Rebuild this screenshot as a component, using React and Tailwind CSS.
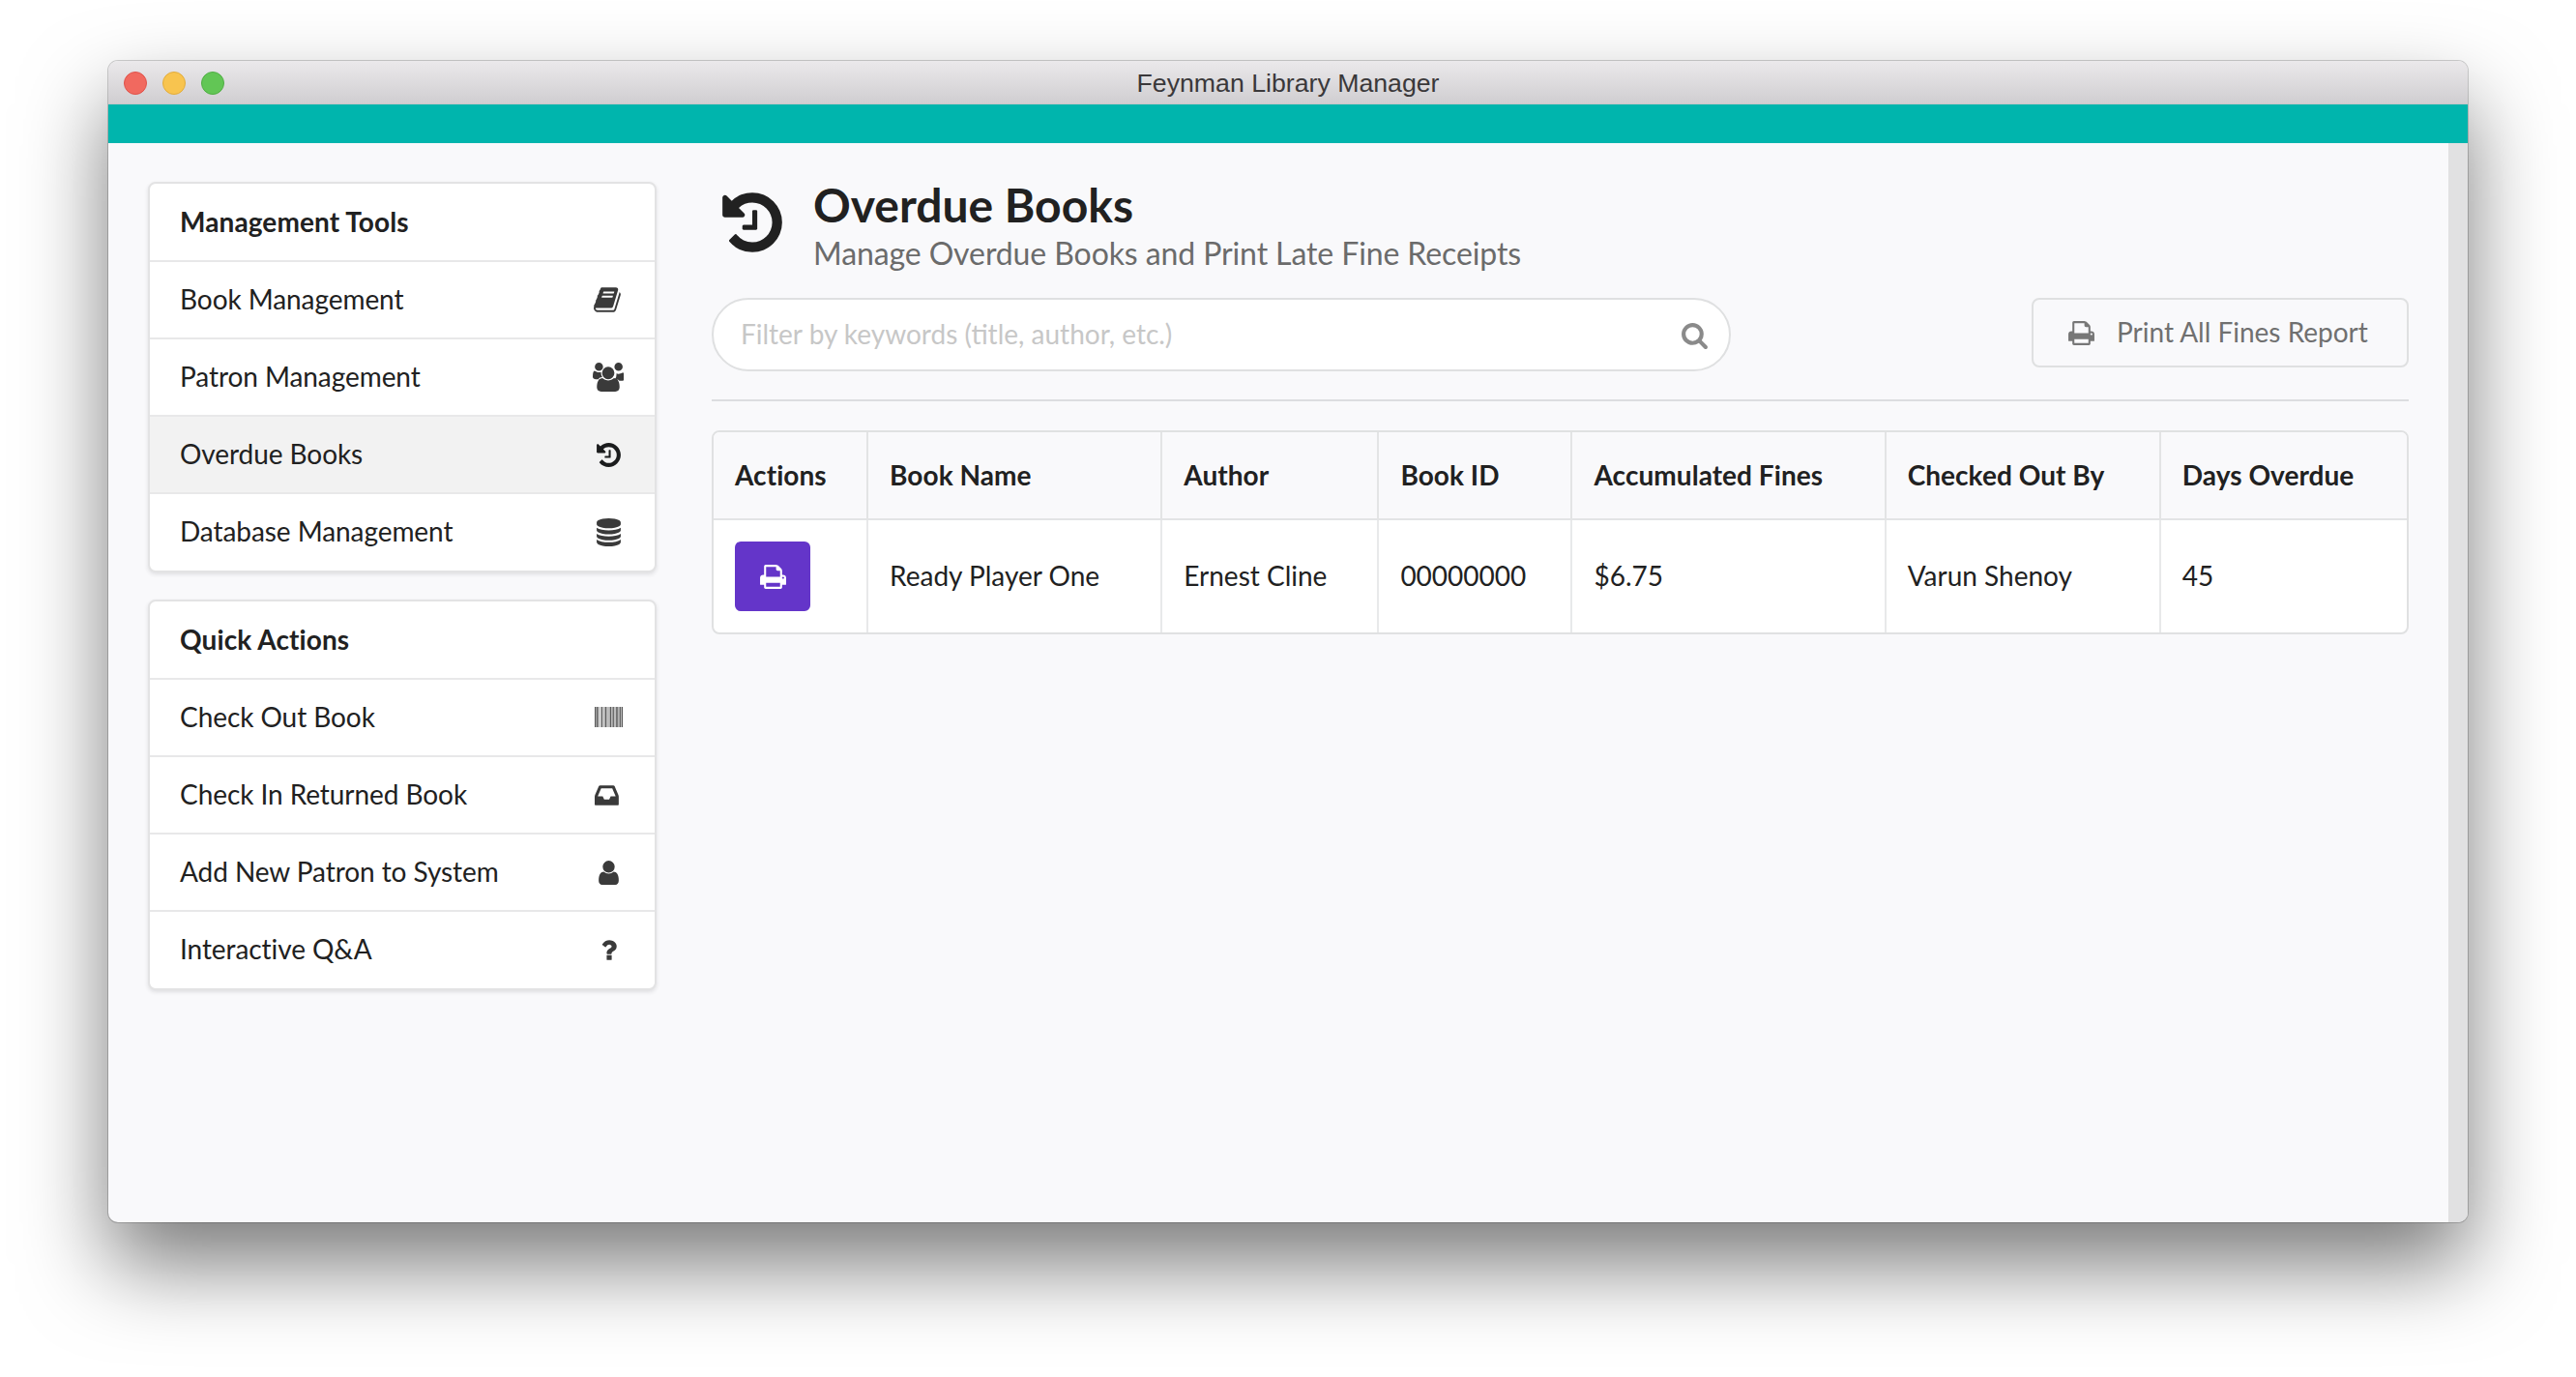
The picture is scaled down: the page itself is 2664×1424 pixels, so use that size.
import React from "react";

const P = {
  book: "M1639 478q40 57 18 129l-275 906q-19 64-76.5 107.5t-122.5 43.5h-923q-77 0-148.5-53.5t-99.5-131.5q-24-67-2-127 0-4 3-27t4-37q1-8-3-21.5t-3-19.5q2-11 8-21t16.5-23.5 16.5-23.5q23-38 45-91.5t30-91.5q3-10 .5-30t-.5-28q3-11 17-28t17-23q21-36 42-92t25-90q1-9-2.5-32t.5-28q4-13 22-30.5t22-22.5q19-26 42.5-84.5t27.5-96.5q1-8-3-25.5t-2-26.5q2-8 9-18t18-23 17-21q8-12 16.5-30.5t15-35 16-36 19.5-32 26.5-23.5 36-11.5 47.5 5.5l-1 3q38-9 51-9h761q74 0 114 56t18 130l-274 906q-36 119-71.5 153.5t-128.5 34.5h-869q-27 0-38 15-11 16-1 43 24 70 144 70h923q29 0 56-15.5t35-41.5l300-987q7-22 5-57 38 15 59 43zm-1064 2q-4 13 2 22.5t20 9.5h608q13 0 25.5-9.5t16.5-22.5l21-64q4-13-2-22.5t-20-9.5h-608q-13 0-25.5 9.5t-16.5 22.5zm-83 256q-4 13 2 22.5t20 9.5h608q13 0 25.5-9.5t16.5-22.5l21-64q4-13-2-22.5t-20-9.5h-608q-13 0-25.5 9.5t-16.5 22.5z",
  users: "M593 896q-162 5-265 128h-134q-82 0-138-40.5t-56-118.5q0-353 124-353 6 0 43.5 21t97.5 42.5 119 21.5q67 0 133-23-5 37-5 66 0 139 81 256zm1071 637q0 120-73 189.5t-194 69.5h-874q-121 0-194-69.5t-73-189.5q0-53 3.5-103.5t14-109 26.5-108.5 43-97.5 62-81 85.5-53.5 111.5-20q10 0 43 21.5t73 48 107 48 135 21.5 135-21.5 107-48 73-48 43-21.5q61 0 111.5 20t85.5 53.5 62 81 43 97.5 26.5 108.5 14 109 3.5 103.5zm-1024-1277q0 106-75 181t-181 75-181-75-75-181 75-181 181-75 181 75 75 181zm704 384q0 159-112.5 271.5t-271.5 112.5-271.5-112.5-112.5-271.5 112.5-271.5 271.5-112.5 271.5 112.5 112.5 271.5zm640 327q0 78-56 118.5t-138 40.5h-134q-103-123-265-128 81-117 81-256 0-29-5-66 66 23 133 23 59 0 119-21.5t97.5-42.5 43.5-21q124 0 124 353zm-128-711q0 106-75 181t-181 75-181-75-75-181 75-181 181-75 181 75 75 181z",
  history: "M1664 896q0 156-61 298t-164 245-245 164-298 61q-172 0-327-72.5t-264-204.5q-7-10-6.5-22.5t8.5-20.5l137-138q10-9 25-9 16 2 23 12 73 95 179 147t225 52q104 0 198.5-40.5t163.5-109.5 109.5-163.5 40.5-198.5-40.5-198.5-109.5-163.5-163.5-109.5-198.5-40.5q-98 0-188 35.5t-160 101.5l137 138q31 30 14 69-17 40-59 40h-448q-26 0-45-19t-19-45v-448q0-42 40-59 39-17 69 14l130 129q107-101 244.5-156.5t284.5-55.5q156 0 298 61t245 164 164 245 61 298zm-640-288v448q0 14-9 23t-23 9h-320q-14 0-23-9t-9-23v-64q0-14 9-23t23-9h224v-352q0-14 9-23t23-9h64q14 0 23 9t9 23z",
  database: "M896 768q237 0 443-43t325-127v170q0 69-103 128t-280 93.5-385 34.5-385-34.5-280-93.5-103-128v-170q119 84 325 127t443 43zm0 768q237 0 443-43t325-127v170q0 69-103 128t-280 93.5-385 34.5-385-34.5-280-93.5-103-128v-170q119 84 325 127t443 43zm0-384q237 0 443-43t325-127v170q0 69-103 128t-280 93.5-385 34.5-385-34.5-280-93.5-103-128v-170q119 84 325 127t443 43zm0-1152q208 0 385 34.5t280 93.5 103 128v128q0 69-103 128t-280 93.5-385 34.5-385-34.5-280-93.5-103-128v-128q0-69 103-128t280-93.5 385-34.5z",
  inbox: "M1023 960h316q-1-3-2.5-8.5t-2.5-7.5l-212-496h-708l-212 496q-1 3-2.5 8.5t-2.5 7.5h316l95 192h320zm513 30v482q0 26-19 45t-45 19h-1408q-26 0-45-19t-19-45v-482q0-62 25-123l238-552q10-25 36.5-42t52.5-17h832q26 0 52.5 17t36.5 42l238 552q25 61 25 123z",
  user: "M1536 1399q0 109-62.5 187t-150.5 78h-854q-88 0-150.5-78t-62.5-187q0-85 8.5-160.5t31.5-152 58.5-131 94-89 134.5-34.5q131 128 313 128t313-128q76 0 134.5 34.5t94 89 58.5 131 31.5 152 8.5 160.5zm-256-887q0 159-112.5 271.5t-271.5 112.5-271.5-112.5-112.5-271.5 112.5-271.5 271.5-112.5 271.5 112.5 112.5 271.5z",
  question: "M1088 1256v240q0 16-12 28t-28 12h-240q-16 0-28-12t-12-28v-240q0-16 12-28t28-12h240q16 0 28 12t12 28zm316-600q0 54-15.5 101t-35 76.5-55 59.5-57.5 43.5-61 35.5q-41 23-68.5 65t-27.5 67q0 17-12 32.5t-28 15.5h-240q-15 0-25.5-18.5t-10.5-37.5v-45q0-83 65-156.5t143-108.5q59-27 84-56t25-76q0-42-46.5-74t-107.5-32q-65 0-108 29-35 25-107 115-13 16-31 16-12 0-25-8l-164-125q-13-10-15.5-25t5.5-28q160-266 464-266 80 0 161 31t146 83 106 127.5 41 158.5z",
  print: "M448 1536h896v-256h-896v256zm0-640h896v-384h-160q-40 0-68-28t-28-68v-160h-640v640zm1152 64q0-26-19-45t-45-19-45 19-19 45 19 45 45 19 45-19 19-45zm128 0v416q0 13-9.5 22.5t-22.5 9.5h-224v160q0 40-28 68t-68 28h-960q-40 0-68-28t-28-68v-160h-224q-13 0-22.5-9.5t-9.5-22.5v-416q0-79 56.5-135.5t135.5-56.5h64v-544q0-40 28-68t68-28h672q40 0 88 20t76 48l152 152q28 28 48 76t20 88v256h64q79 0 135.5 56.5t56.5 135.5z",
  search: "M1216 832q0-185-131.5-316.5t-316.5-131.5-316.5 131.5-131.5 316.5 131.5 316.5 316.5 131.5 316.5-131.5 131.5-316.5zm512 832q0 52-38 90t-90 38q-54 0-90-38l-343-342q-179 124-399 124-143 0-273.5-55.5t-225-150-150-225-55.5-273.5 55.5-273.5 150-225 225-150 273.5-55.5 273.5 55.5 225 150 150 225 55.5 273.5q0 220-124 399l343 343q37 37 37 90z",
};

const Icon = ({ name, className, vb = "0 0 1792 1792" }) => (
  <svg viewBox={vb} className={className} fill="currentColor"><path d={P[name]} /></svg>
);

const BarcodeIcon = ({ className }) => {
  const bars = [[0,1.5],[2,1],[3.5,1],[6,.6],[7.2,1],[9,.6],[10.2,.6],[11.4,1],[13,.6],[14.2,.6],[15.4,.6],[16.6,1.4],[18.6,.6],[19.8,1],[21.4,.6],[22.6,1],[24,.8],[25.4,1],[27,1.2],[28.8,1.2]];
  return (
    <svg viewBox="0 0 30 21" preserveAspectRatio="none" className={className} fill="currentColor">
      {bars.map(([x, w]) => <rect key={x} x={x} y="0" width={w} height="21" />)}
    </svg>
  );
};

const panels = [
  {
    title: "Management Tools",
    items: [
      ["Book Management", <Icon name="book" className="w-[30px] h-[30px]" />],
      ["Patron Management", <Icon name="users" vb="0 0 1920 1792" className="w-[32px] h-[30px]" />],
      ["Overdue Books", <Icon name="history" className="w-[29px] h-[29px] text-[#1b1c1d]" />, true],
      ["Database Management", <Icon name="database" className="w-[29px] h-[29px]" />],
    ],
  },
  {
    title: "Quick Actions",
    items: [
      ["Check Out Book", <BarcodeIcon className="w-[29px] h-[21px] text-[#555] -mt-[2px]" />],
      ["Check In Returned Book", <Icon name="inbox" className="w-[29px] h-[29px]" />],
      ["Add New Patron to System", <Icon name="user" className="w-[29px] h-[29px]" />],
      ["Interactive Q&A", <Icon name="question" className="w-[29px] h-[29px]" />],
    ],
  },
];

const Panel = ({ title, items }) => (
  <div className="bg-white rounded-[8px] border-2 border-[#e3e3e4] pb-[1px] shadow-[0_2px_4px_rgba(34,36,38,0.12)] flex flex-col">
    <div className="h-[79px] pb-[1px] flex items-center pl-[31px] font-bold text-[28px] tracking-[0.1px] text-[#212121]">{title}</div>
    {items.map(([label, icon, active]) => (
      <div key={label} className={`h-[80px] flex items-center justify-between pl-[31px] pr-[31px] border-t-2 border-[#e8e8e9] text-[28px] tracking-[-0.07px] text-[#212121] ${active ? "bg-[#f2f2f2]" : ""}`}>
        <span className="pb-[2px]">{label}</span>
        <span className="w-[34px] flex justify-center text-[#3a3a3a]">{icon}</span>
      </div>
    ))}
  </div>
);

const headers = ["Actions", "Book Name", "Author", "Book ID", "Accumulated Fines", "Checked Out By", "Days Overdue"];
const cells = ["Ready Player One", "Ernest Cline", "00000000", "$6.75", "Varun Shenoy", "45"];
const widths = ["w-[158px]", "w-[304px]", "w-[224px]", "w-[200px]", "w-[324px]", "w-[284px]", "w-[256px]"];

export default function App() {
  return (
    <div className="w-[2664px] h-[1424px] bg-white overflow-hidden pl-[112px] pt-[63px] font-['Lato',sans-serif]">
      <div className="w-[2440px] h-[1201px] flex flex-col rounded-[10px] overflow-hidden bg-[#f9f9fb] shadow-[0_0_0_1px_rgba(0,0,0,0.18),0_44px_88px_rgba(0,0,0,0.52)]">
        <div className="h-[45px] relative flex items-center justify-center bg-gradient-to-b from-[#ebe9eb] to-[#d0ced1] border-b border-[#c8c6c9]">
          <div className="absolute left-[16px] top-[11px] flex gap-[16px]">
            <span className="w-[24px] h-[24px] rounded-full bg-[#f1695f] border border-[#e0524a]" />
            <span className="w-[24px] h-[24px] rounded-full bg-[#f8c44f] border border-[#e2ac3c]" />
            <span className="w-[24px] h-[24px] rounded-full bg-[#62c655] border border-[#50ae44]" />
          </div>
          <span className="font-['Liberation_Sans',sans-serif] text-[26.7px] pt-[2px] text-[#3a383a]">Feynman Library Manager</span>
        </div>
        <div className="h-[40px] bg-[#00b5ad]" />
        <div className="flex-1 flex min-h-0">
          <div className="flex-1 flex items-start pl-[41px] pr-[41px] pt-[40px]">
            <div className="w-[526px] shrink-0 flex flex-col gap-[28px]">
              {panels.map((p) => <Panel key={p.title} {...p} />)}
            </div>
            <div className="w-[1755px] shrink-0 ml-[57px] -mt-[13px]">
              <div className="flex items-start h-[133px]">
                <Icon name="history" className="w-[72px] h-[72px] mt-[19px] ml-[6px] text-[#212121]" />
                <div className="ml-[27px] pt-[8px]">
                  <div className="text-[48px] leading-[58px] font-bold text-[#212121]">Overdue Books</div>
                  <div className="text-[32px] leading-[40px] tracking-[-0.1px] text-[#6b6b6b] mt-[1px]">Manage Overdue Books and Print Late Fine Receipts</div>
                </div>
              </div>
              <div className="flex justify-between items-start">
                <div className="w-[1054px] h-[76px] rounded-full bg-white border-2 border-[#dfe0e1] flex items-center justify-between pl-[28px] pr-[21px]">
                  <span className="text-[28px] pb-[2px] text-[#c7c7c7]">Filter by keywords (title, author, etc.)</span>
                  <Icon name="search" className="w-[29px] h-[29px] text-[#8a8a8a]" />
                </div>
                <div className="w-[390px] h-[72px] rounded-[8px] border-2 border-[#dfe0e1] flex items-center pl-[35px] text-[#707070] text-[28px]">
                  <Icon name="print" className="w-[29px] h-[29px] text-[#777]" />
                  <span className="ml-[22px] pb-[2px]">Print All Fines Report</span>
                </div>
              </div>
              <div className="h-[2px] bg-[#dcdde0] mt-[29px] mb-[30px]" />
              <table className="w-full table-fixed border-separate border-spacing-0 border-2 border-[#e0e1e2] rounded-[8px] bg-white text-[28px] text-[#212121] overflow-hidden">
                <thead>
                  <tr className="h-[91px] bg-[#f9f9fb]">
                    {headers.map((h, i) => (
                      <th key={h} className={`${widths[i]} text-left font-bold tracking-[0.05px] pl-[22px] pb-[2px] border-b-2 border-[#e3e4e5] ${i ? "border-l-2" : ""}`}>{h}</th>
                    ))}
                  </tr>
                </thead>
                <tbody>
                  <tr className="h-[116px]">
                    <td className="pl-[22px]">
                      <span className="w-[78px] h-[72px] rounded-[6px] bg-[#6435c9] flex items-center justify-center">
                        <Icon name="print" className="w-[29px] h-[29px] text-white" />
                      </span>
                    </td>
                    {cells.map((c) => (
                      <td key={c} className="pl-[22px] pb-[2px] border-l-2 border-[#e8e9ea]">{c}</td>
                    ))}
                  </tr>
                </tbody>
              </table>
            </div>
          </div>
          <div className="w-[20px] bg-[#e1e1e2]" />
        </div>
      </div>
    </div>
  );
}
